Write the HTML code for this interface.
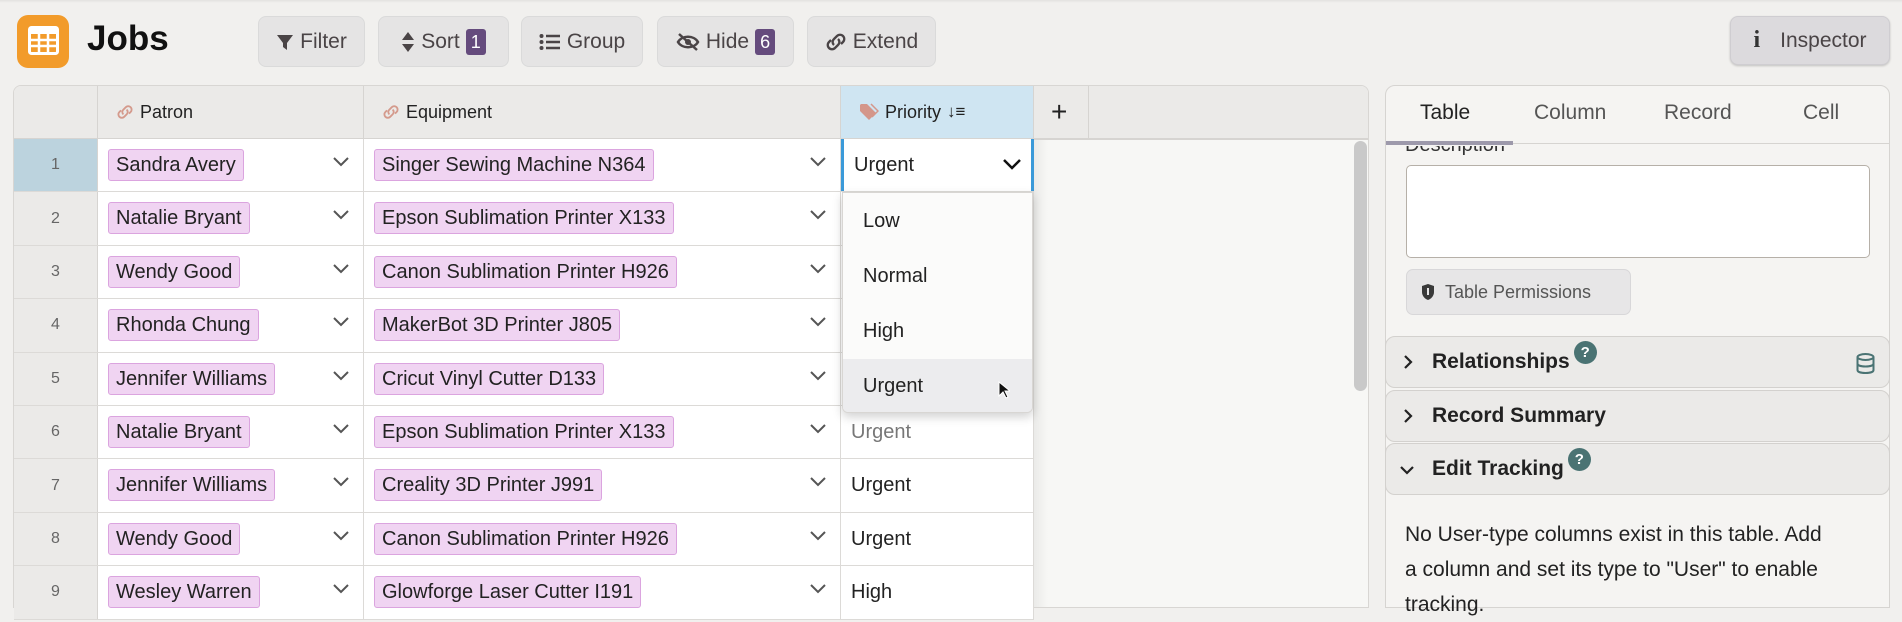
<!DOCTYPE html>
<html><head><meta charset="utf-8">
<style>
*{box-sizing:border-box;margin:0;padding:0}
body{width:1902px;height:608px;overflow:hidden;background:#f1f0ee;font-family:"Liberation Sans",sans-serif;color:#222;position:relative}
.abs{position:absolute}
.btn{position:absolute;top:16px;height:51px;background:#e5e4e4;border:1px solid #dadada;border-radius:8px;display:flex;align-items:center;justify-content:center;gap:6px;font-size:21px;color:#4a4446}
.badge{background:#654b7d;color:#fff;border-radius:3px;font-size:18px;padding:2px 5px;line-height:22px}
.grid{position:absolute;left:13px;top:85px;width:1356px;height:523px;background:#f7f7f5;border:1px solid #d8d6d3;border-radius:8px 8px 0 0;overflow:hidden}
.hdr{position:absolute;top:0;height:54px;background:#ebeae8;border-right:1px solid #d6d4d1;border-bottom:2px solid #d6d4d1;font-size:18px;display:flex;align-items:center;padding-left:18px;gap:6px}
.row{position:absolute;left:0;width:1020px;height:53.4px;border-bottom:1px solid #dcdad7}
.rn{position:absolute;left:0;top:0;width:84px;height:100%;background:#ebeae8;color:#666;font-size:16px;display:flex;align-items:center;justify-content:center;border-right:1px solid #d6d4d1}
.c{position:absolute;top:0;height:100%;background:#fff;border-right:1px solid #dcdad7}
.pill{position:absolute;left:10px;top:10px;height:32px;background:#f0d4f2;border:1px solid #dba4df;border-radius:3px;font-size:20px;padding:0 7px;line-height:30px;white-space:nowrap;color:#222}
.chev{position:absolute;right:14px;top:18px}
.pt{position:absolute;left:10px;top:0;line-height:53px;font-size:20px}
.sec{position:absolute;left:1385px;width:505px;height:52px;background:#ebeae8;border:1px solid #d3d1ce;border-radius:10px;font-size:21px;font-weight:bold;display:flex;align-items:center;padding-left:46px}
.q{display:inline-block;width:23px;height:23px;border-radius:50%;background:#4a7373;color:#fff;font-size:15px;text-align:center;line-height:23px;vertical-align:top;margin-left:4px;position:relative;top:-10px}
</style></head><body>
<div class="abs" style="left:0;top:0;width:1902px;height:3px;background:linear-gradient(#e2e1df,#f1f0ee)"></div>
<div class="abs" style="left:17px;top:15px;width:52px;height:53px;border-radius:11px;background:#f29b2a"></div>
<svg class="abs" style="left:28px;top:26px" width="31" height="29" viewBox="0 0 31 29"><rect x="1.5" y="1.5" width="28" height="26" rx="2" fill="none" stroke="#fff" stroke-width="3"/><rect x="1" y="1" width="29" height="7" fill="#fff"/><path d="M2 14h27M2 20h27M11 8v19M20 8v19" stroke="#fff" stroke-width="2.5"/></svg>
<div class="abs" style="left:87px;top:19px;font-size:35px;font-weight:bold;color:#111">Jobs</div>

<div class="btn" style="left:258px;width:107px"><svg width="18" height="18" viewBox="0 0 18 18"><path d="M1 2h16l-6 8v7l-4-3v-4z" fill="#4a4446"/></svg>Filter</div>
<div class="btn" style="left:378px;width:131px"><svg width="14" height="22" viewBox="0 0 14 22"><path d="M7 1l6 8H1zM7 21l6-8H1z" fill="#4a4446"/></svg>Sort <span class="badge">1</span></div>
<div class="btn" style="left:521px;width:122px"><svg width="22" height="18" viewBox="0 0 22 18"><circle cx="2.5" cy="3" r="2" fill="#4a4446"/><circle cx="2.5" cy="9" r="2" fill="#4a4446"/><circle cx="2.5" cy="15" r="2" fill="#4a4446"/><path d="M7 3h14M7 9h14M7 15h14" stroke="#4a4446" stroke-width="2.5"/></svg>Group</div>
<div class="btn" style="left:657px;width:137px"><svg width="24" height="20" viewBox="0 0 24 20"><path d="M2 10c4-7 16-7 20 0-4 7-16 7-20 0z" fill="none" stroke="#4a4446" stroke-width="2.5"/><circle cx="12" cy="10" r="3" fill="#4a4446"/><path d="M3 2l18 16" stroke="#4a4446" stroke-width="2.5"/></svg>Hide <span class="badge">6</span></div>
<div class="btn" style="left:807px;width:129px"><svg width="22" height="20" viewBox="0 0 22 20"><path d="M9 13a4 4 0 0 1 0-6l3-3a4 4 0 0 1 6 6l-2 2M13 7a4 4 0 0 1 0 6l-3 3a4 4 0 0 1-6-6l2-2" fill="none" stroke="#4a4446" stroke-width="2.3"/></svg>Extend</div>
<div class="btn" style="left:1730px;width:160px;top:16px;height:49px;background:#dcdadd;border-color:#cfcdd1;box-shadow:0 1px 2px rgba(0,0,0,.2);gap:20px"><span style="font-family:'Liberation Serif',serif;font-weight:bold;font-size:24px;color:#333">i</span>Inspector</div>

<div class="grid">
  <div class="hdr" style="left:0;width:84px;padding:0"></div>
  <div class="hdr" style="left:84px;width:266px"><svg width="18" height="16" viewBox="0 0 22 20"><path d="M9 13a4 4 0 0 1 0-6l3-3a4 4 0 0 1 6 6l-2 2M13 7a4 4 0 0 1 0 6l-3 3a4 4 0 0 1-6-6l2-2" fill="none" stroke="#d49a8c" stroke-width="2.3"/></svg>Patron</div>
  <div class="hdr" style="left:350px;width:477px"><svg width="18" height="16" viewBox="0 0 22 20"><path d="M9 13a4 4 0 0 1 0-6l3-3a4 4 0 0 1 6 6l-2 2M13 7a4 4 0 0 1 0 6l-3 3a4 4 0 0 1-6-6l2-2" fill="none" stroke="#d49a8c" stroke-width="2.3"/></svg>Equipment</div>
  <div class="hdr" style="left:827px;width:193px;background:#cfe5f2"><svg width="20" height="18" viewBox="0 0 20 18"><path d="M1 2v6l9 9 7-7-9-9H2z" fill="#d4968a"/><path d="M12 1l7 7-6 6" fill="none" stroke="#d4968a" stroke-width="1.5"/></svg>Priority <span style="font-weight:bold;font-size:17px">&#8595;&#8801;</span></div>
  <div class="hdr" style="left:1020px;width:55px;padding-left:17px;font-size:28px">+</div>
  <div class="hdr" style="left:1075px;width:290px;border-right:none"></div>
  <div class="abs" style="left:1340px;top:55px;width:13px;height:250px;background:#c9c9c9;border-radius:7px"></div>
  <div class="abs" style="left:1020px;top:54px;width:14px;height:470px;background:linear-gradient(90deg,rgba(0,0,0,.05),transparent)"></div>
</div>

<div id="rows" class="abs" style="left:14px;top:139px;width:1020px;height:470px"></div>

<div class="abs" style="left:842px;top:192px;width:191px;height:221px;background:#fbfbfa;border:1px solid #d8d6d3;border-radius:0 0 6px 6px;box-shadow:0 4px 10px rgba(0,0,0,.18);font-size:20px;overflow:hidden">
  <div style="position:absolute;left:20px;top:17px">Low</div>
  <div style="position:absolute;left:20px;top:72px">Normal</div>
  <div style="position:absolute;left:20px;top:127px">High</div>
  <div style="position:absolute;left:0;top:166px;width:100%;height:55px;background:#ececee"></div>
  <div style="position:absolute;left:20px;top:182px">Urgent</div>
  <svg style="position:absolute;left:155px;top:188px" width="12" height="18" viewBox="0 0 12 18"><path d="M1 1v14l4-4 3 6 2-1-3-6h5z" fill="#111" stroke="#fff" stroke-width="1"/></svg>
</div>

<div class="abs" style="left:1385px;top:85px;width:505px;height:523px;background:#f5f4f2;border:1px solid #d6d4d1;border-radius:10px 10px 0 0"></div>
<div class="abs" style="left:1386px;top:86px;width:503px;height:58px;border-bottom:1px solid #d6d4d1;font-size:21px;color:#555">
  <span class="abs" style="left:34px;top:15px;color:#222">Table</span>
  <span class="abs" style="left:148px;top:15px">Column</span>
  <span class="abs" style="left:278px;top:15px">Record</span>
  <span class="abs" style="left:417px;top:15px">Cell</span>
</div>
<div class="abs" style="left:1386px;top:141px;width:127px;height:4px;background:#9d99ab"></div>
<div class="abs" style="left:1405px;top:134px;font-size:20px;color:#333;clip-path:inset(12px 0 0 0)">Description</div>
<div class="abs" style="left:1406px;top:165px;width:464px;height:93px;background:#fff;border:1px solid #b6b0a8;border-radius:5px"></div>
<div class="abs" style="left:1406px;top:269px;width:225px;height:46px;background:#e7e6e7;border:1px solid #d8d7d9;border-radius:7px;font-size:18px;color:#555;display:flex;align-items:center;padding-left:14px;gap:10px"><svg width="14" height="18" viewBox="0 0 14 18"><path d="M7 1l6 2v6c0 4-3 7-6 8-3-1-6-4-6-8V3z" fill="#3a3a3a"/><path d="M7 5v7" stroke="#e7e6e7" stroke-width="2"/></svg>Table Permissions</div>

<div class="sec" style="top:336px">Relationships<span class="q">?</span>
<svg style="position:absolute;right:14px;top:16px" width="19" height="21" viewBox="0 0 19 21"><ellipse cx="9.5" cy="4" rx="8" ry="3" fill="none" stroke="#4a7373" stroke-width="2"/><path d="M1.5 4v13c0 2 3.5 3 8 3s8-1 8-3V4M1.5 10.5c0 2 3.5 3 8 3s8-1 8-3" fill="none" stroke="#4a7373" stroke-width="2"/></svg></div>
<div class="sec" style="top:390px">Record Summary</div>
<div class="sec" style="top:443px">Edit Tracking<span class="q">?</span></div>
<svg class="abs" style="left:1403px;top:355px" width="10" height="14" viewBox="0 0 10 14"><path d="M2 1l6 6-6 6" fill="none" stroke="#222" stroke-width="2.2"/></svg>
<svg class="abs" style="left:1403px;top:409px" width="10" height="14" viewBox="0 0 10 14"><path d="M2 1l6 6-6 6" fill="none" stroke="#222" stroke-width="2.2"/></svg>
<svg class="abs" style="left:1400px;top:465px" width="14" height="10" viewBox="0 0 14 10"><path d="M1 2l6 6 6-6" fill="none" stroke="#222" stroke-width="2.2"/></svg>
<div class="abs" style="left:1405px;top:517px;width:480px;font-size:21px;line-height:35px;color:#222;white-space:nowrap">No User-type columns exist in this table. Add<br>a column and set its type to "User" to enable<br>tracking.</div>

<script>
var d=[["Sandra Avery","Singer Sewing Machine N364","Urgent"],["Natalie Bryant","Epson Sublimation Printer X133",""],["Wendy Good","Canon Sublimation Printer H926",""],["Rhonda Chung","MakerBot 3D Printer J805",""],["Jennifer Williams","Cricut Vinyl Cutter D133",""],["Natalie Bryant","Epson Sublimation Printer X133","Urgent"],["Jennifer Williams","Creality 3D Printer J991","Urgent"],["Wendy Good","Canon Sublimation Printer H926","Urgent"],["Wesley Warren","Glowforge Laser Cutter I191","High"]];
var ch='<svg class="chev" width="16" height="10" viewBox="0 0 16 10"><path d="M1 1l7 7 7-7" fill="none" stroke="#555" stroke-width="2"/></svg>';
var h='';
d.forEach(function(r,i){
 h+='<div class="row" style="top:'+(i*53.4)+'px"><div class="rn" style="'+(i==0?'background:#bcd3de':'')+'">'+(i+1)+'</div>'+
 '<div class="c" style="left:84px;width:266px"><div class="pill">'+r[0]+'</div>'+ch+'</div>'+
 '<div class="c" style="left:350px;width:477px"><div class="pill">'+r[1]+'</div>'+ch+'</div>'+
 '<div class="c" style="left:827px;width:193px'+(i==0?';border-left:3px solid #3b9ad9;border-right:3px solid #3b9ad9':'')+'"><div class="pt" style="'+(i==5?'color:#777':'')+'">'+r[2]+'</div>'+(i==0?'<svg style="position:absolute;right:10px;top:20px" width="18" height="11" viewBox="0 0 18 11"><path d="M1 1l8 8 8-8" fill="none" stroke="#111" stroke-width="2.5"/></svg>':'')+'</div></div>';
});
document.getElementById('rows').innerHTML=h;
</script>
</body></html>
